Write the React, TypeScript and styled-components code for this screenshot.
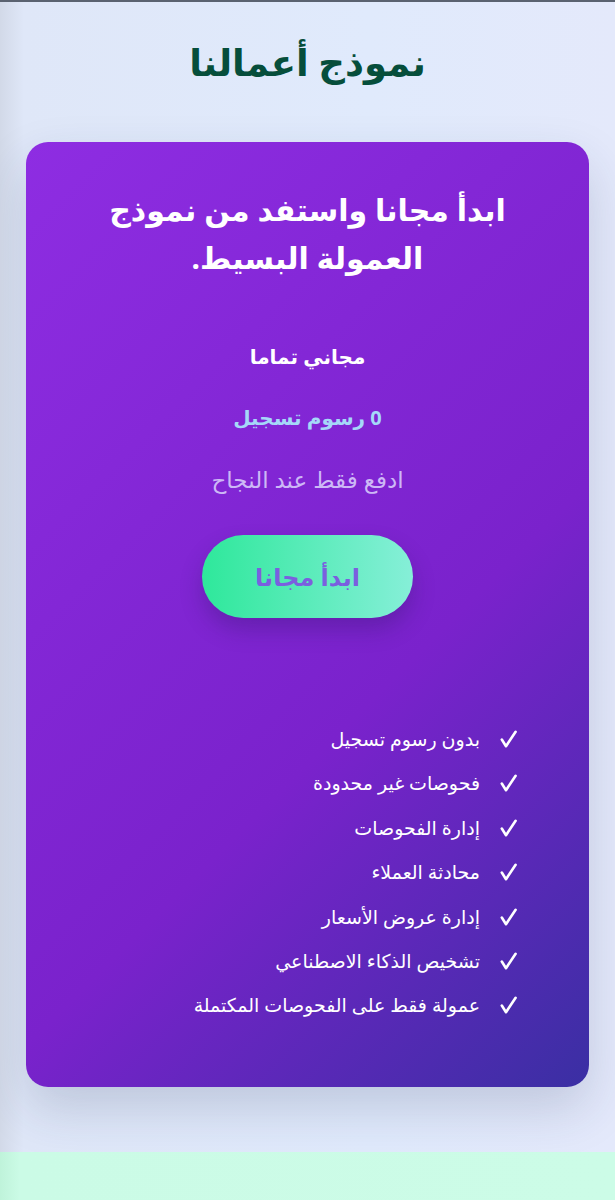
import { FC } from "react";
import styled, { createGlobalStyle } from "styled-components";

// #region styled
const GlobalStyle = createGlobalStyle`
  html, body {
    margin: 0;
    padding: 0;
  }
  body {
    font-family: "Noto Sans", "DejaVu Sans", sans-serif;
    background: #e0eafc;
    border-top: 2px solid #5a6270;
  }
`

const Section = styled.section`
  direction: rtl;
  padding: 30px 26px 65px;
  background: linear-gradient(to right, #d2d9e8 0, #dfe7f8 24px, #e0eafc 60%, #e4e9fb 100%);
`

const Title = styled.h2`
  margin: 0 0 50px;
  text-align: center;
  font-size: 37px;
  line-height: 60px;
  font-weight: 700;
  color: #064e3b;
`

const Card = styled.div`
  border-radius: 22px;
  padding: 44px 32px 67px;
  color: #fff;
  text-align: center;
  background: linear-gradient(135deg, #8e2de2 0%, #7a22cc 60%, #3a2fa3 100%);
  box-shadow: 0 22px 50px rgba(40, 50, 90, 0.18);
`

const CardHeading = styled.h3`
  margin: 0 0 60px;
  font-size: 30px;
  line-height: 48px;
  font-weight: 700;
`

const PriceBlock = styled.div`
  display: flex;
  flex-direction: column;
  align-items: center;
  gap: 31px;
  margin-bottom: 41px;
`

const PriceLine = styled.p<{ tone: "white" | "blue" | "lavender"; bold?: boolean; size: number }>`
  margin: 0;
  line-height: 30px;
  font-size: ${p => p.size}px;
  font-weight: ${p => (p.bold ? 700 : 400)};
  color: ${p => (p.tone === "white" ? "#ffffff" : p.tone === "blue" ? "#a5d8f8" : "#cdb8f6")};
`

const StartButton = styled.button`
  font-family: inherit;
  border: none;
  border-radius: 999px;
  width: 211px;
  height: 83px;
  font-size: 24px;
  font-weight: 700;
  color: #7b5fdf;
  background: linear-gradient(to right, #2ee89b, #86efd8);
  box-shadow: 0 12px 22px rgba(40, 20, 90, 0.28);
  cursor: pointer;
`

const FeatureList = styled.ul`
  list-style: none;
  margin: 106px 0 0;
  padding: 0 40px 0 0;
  display: flex;
  flex-direction: column;
  gap: 14.4px;
  text-align: right;
`

const FeatureItem = styled.li`
  display: flex;
  align-items: center;
  gap: 20px;
  font-size: 19px;
  line-height: 30px;
`

const Check = styled.svg`
  flex: none;
  width: 17px;
  height: 18px;
`
// #endregion

const MintBand = styled.div`
  height: 49px;
  background: linear-gradient(to right, #bff3da 0, #cbfbe6 20px, #ccfce7 100%);
`

const features = [
  "بدون رسوم تسجيل",
  "فحوصات غير محدودة",
  "إدارة الفحوصات",
  "محادثة العملاء",
  "إدارة عروض الأسعار",
  "تشخيص الذكاء الاصطناعي",
  "عمولة فقط على الفحوصات المكتملة",
]

const App: FC = () => {
  return (
    <>
      <GlobalStyle />
      <Section>
        <Title>نموذج أعمالنا</Title>
        <Card>
          <CardHeading>ابدأ مجانا واستفد من نموذج العمولة البسيط.</CardHeading>
          <PriceBlock>
            <PriceLine tone="white" bold size={20}>مجاني تماما</PriceLine>
            <PriceLine tone="blue" bold size={20}>0 رسوم تسجيل</PriceLine>
            <PriceLine tone="lavender" size={23}>ادفع فقط عند النجاح</PriceLine>
          </PriceBlock>
          <StartButton>ابدأ مجانا</StartButton>
          <FeatureList>
            {features.map(f => (
              <FeatureItem key={f}>
                <Check viewBox="0 0 17 18" aria-hidden="true">
                  <path d="M1.8 9.5 L6 16.2 L15.6 1.8" fill="none" stroke="#fff" strokeWidth="2.6" strokeLinecap="round" strokeLinejoin="round" />
                </Check>
                <span>{f}</span>
              </FeatureItem>
            ))}
          </FeatureList>
        </Card>
      </Section>
      <MintBand />
    </>
  );
}

export default App;
